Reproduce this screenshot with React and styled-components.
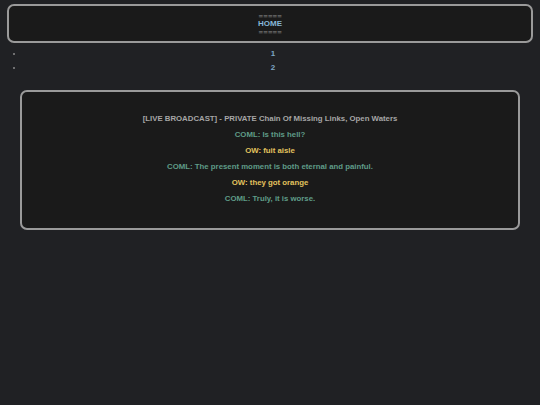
import styled, { createGlobalStyle } from "styled-components";

const GlobalStyle = createGlobalStyle`
  html, body {
    margin: 0;
    background: #202124;
    font-family: "Liberation Sans", Arial, sans-serif;
    font-weight: bold;
  }
`;

const Page = styled.div`
  width: 540px;
  min-height: 405px;
  padding: 4px 7px 0;
  box-sizing: border-box;
`;

const Header = styled.header`
  height: 39px;
  box-sizing: border-box;
  border: 2px solid #9a9a9a;
  border-radius: 7px;
  background: #1a1a1a;
  display: flex;
  flex-direction: column;
  align-items: center;
  justify-content: center;
`;

const Dashes = styled.div`
  font-family: "DejaVu Sans", sans-serif;
  font-size: 6px;
  line-height: 7px;
  color: #6e6e6e;
  letter-spacing: -0.3px;
`;

const HomeLink = styled.a`
  font-size: 8px;
  line-height: 9px;
  color: #86b6d8;
  text-decoration: none;
`;

const NavList = styled.ul`
  margin: 4px 0 0;
  padding: 0;
  list-style: none;
`;

const NavItem = styled.li`
  position: relative;
  height: 14px;
  line-height: 14px;
  text-align: center;
  font-size: 8px;
  color: #7ea6c4;
  padding-left: 6px;

  &::before {
    content: "";
    position: absolute;
    left: 6px;
    top: 6px;
    width: 2px;
    height: 2px;
    border-radius: 50%;
    background: #8a8a8a;
  }
`;

const Broadcast = styled.section`
  margin: 15px 13px 0;
  height: 140px;
  box-sizing: border-box;
  border: 2px solid #9a9a9a;
  border-radius: 7px;
  background: #1a1a1a;
  padding-top: 19px;
  display: flex;
  flex-direction: column;
  align-items: center;
`;

const Line = styled.div`
  font-size: 7.8px;
  line-height: 16px;
  color: ${(p) => p.$color};
`;

const colors = {
  title: "#a6a6a6",
  COML: "#5f9c88",
  OW: "#e2c25e",
};

const lines = [
  ["COML", "COML: Is this hell?"],
  ["OW", "OW: fuit aisle"],
  ["COML", "COML: The present moment is both eternal and painful."],
  ["OW", "OW: they got orange"],
  ["COML", "COML: Truly, it is worse."],
];

export default function App() {
  return (
    <Page>
      <GlobalStyle />
      <Header>
        <Dashes>=====</Dashes>
        <HomeLink href="#">HOME</HomeLink>
        <Dashes>=====</Dashes>
      </Header>
      <NavList>
        <NavItem>1</NavItem>
        <NavItem>2</NavItem>
      </NavList>
      <Broadcast>
        <Line $color={colors.title}>
          [LIVE BROADCAST] - PRIVATE Chain Of Missing Links, Open Waters
        </Line>
        {lines.map(([who, text], i) => (
          <Line key={i} $color={colors[who]}>
            {text}
          </Line>
        ))}
      </Broadcast>
    </Page>
  );
}
